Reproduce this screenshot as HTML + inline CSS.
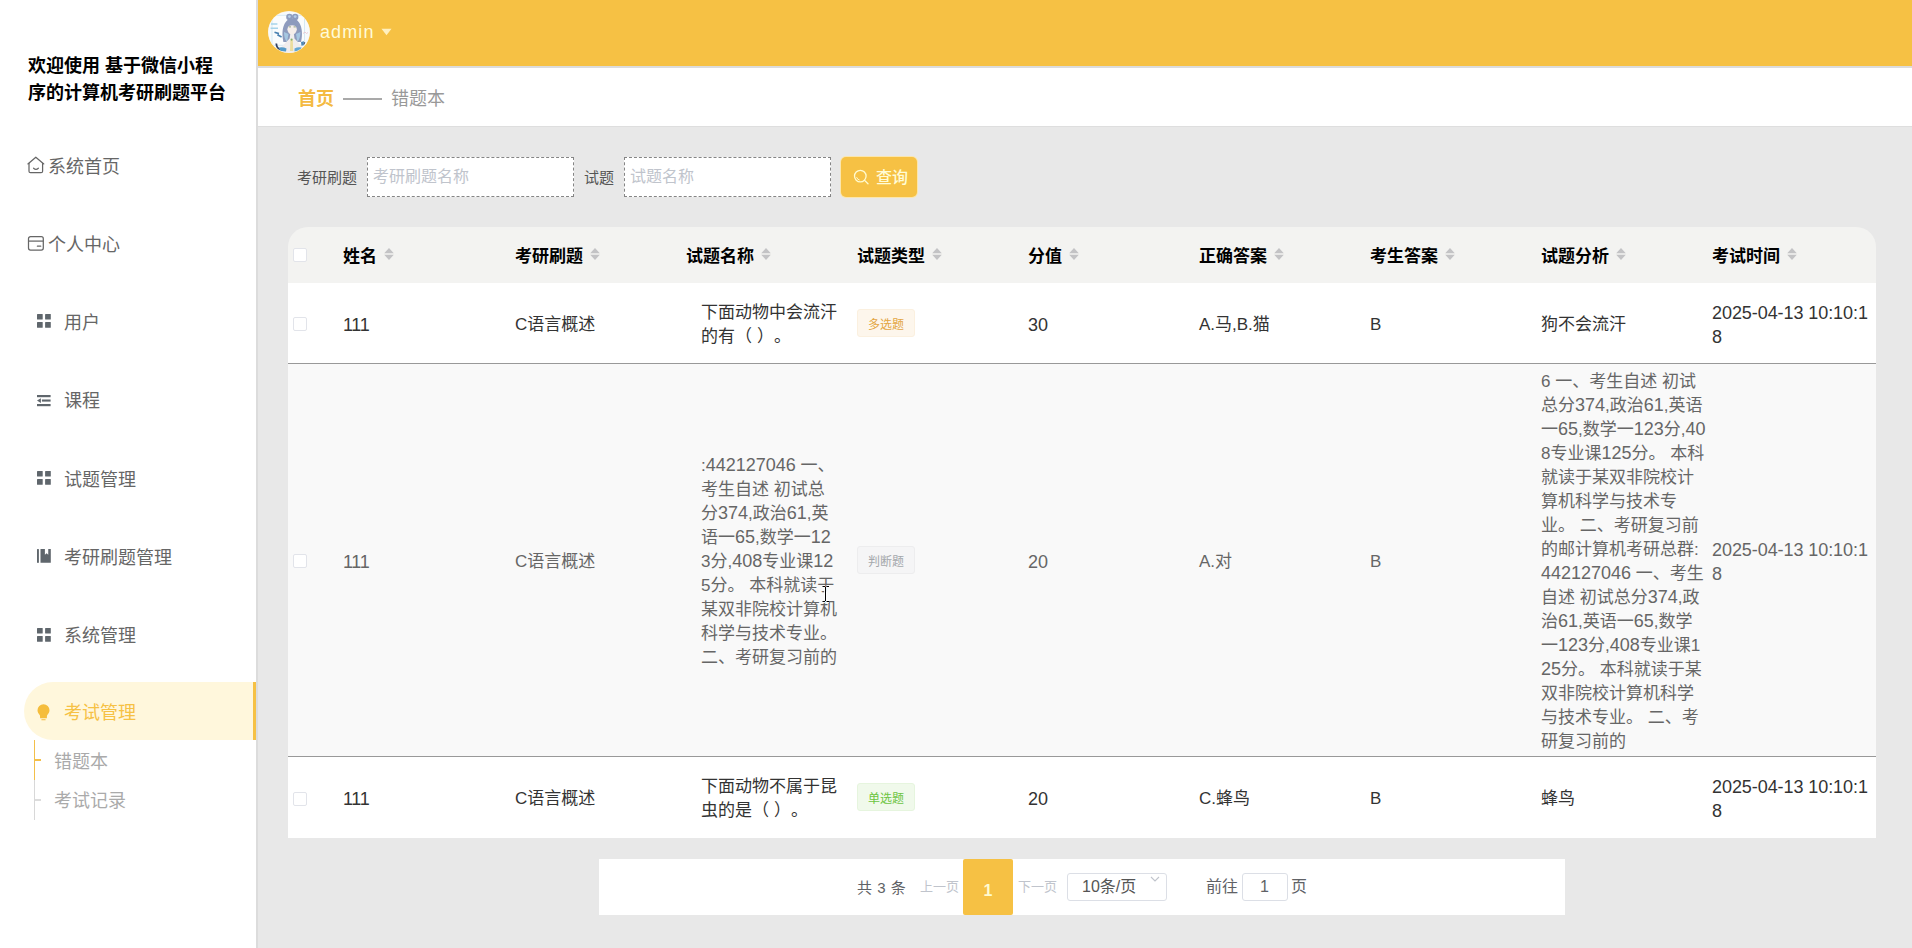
<!DOCTYPE html>
<html lang="zh-CN">
<head>
<meta charset="utf-8">
<title>错题本</title>
<style>
*{box-sizing:border-box;margin:0;padding:0}
html,body{width:1912px;height:948px;overflow:hidden}
body{position:relative;background:#e8e8e8;font-family:"Liberation Sans","Noto Sans CJK SC",sans-serif;color:#333;font-size:17px;text-spacing-trim:space-all}
.abs{position:absolute}
/* sidebar */
#side{position:absolute;left:0;top:0;width:256px;height:948px;background:#fff}
#sideborder{position:absolute;left:256px;top:0;width:2px;height:948px;background:#dcdcdc}
#title{position:absolute;left:28px;top:53px;width:215px;font-size:18px;line-height:27px;font-weight:700;color:#000;white-space:nowrap}
.mi{position:absolute;left:0;width:256px;height:58px;line-height:58px;font-size:18px;color:#666;white-space:nowrap}
.mi .tx{position:absolute;top:2px}
.mi svg{position:absolute}
#active{position:absolute;left:24px;top:682px;width:232px;height:58px;background:#fff7dc;border-radius:29px 0 0 29px;border-right:3px solid #f6c144}
.sub{position:absolute;left:54px;font-size:18px;color:#aaa;line-height:24px;white-space:nowrap}
/* header */
#hdr{position:absolute;left:258px;top:0;width:1654px;height:66px;background:#f6c144}
#hdrborder{position:absolute;left:258px;top:66px;width:1654px;height:2px;background:#dcdcdc}
#crumb{position:absolute;left:258px;top:68px;width:1654px;height:58px;background:#fff}

.inp{width:207px;height:40px;background:#fff;border:1px dashed #858585;font-size:16px;line-height:38px;color:#c0c4cc;padding-left:5px;white-space:nowrap}

.cb{width:14px;height:14px;background:#fff;border:1px solid #e2e4ea;border-radius:2px}
.th{font-size:17px;line-height:24px;font-weight:700;color:#000;white-space:nowrap}
.th svg{margin-left:7px;position:relative;top:-2px}
.td{font-size:17px;line-height:24px;white-space:nowrap;transform:translateY(-50%);margin-top:2px}
.ls1{font-size:18px;letter-spacing:-.3px}.ls4{font-size:18px;letter-spacing:-.07px}
.tag{height:28px;line-height:31px;padding:0 10px;font-size:12px;border:1px solid;border-radius:3px;white-space:nowrap}
.tag-w{background:#fdf6ec;border-color:#fbf0df;color:#e3a542}
.tag-i{background:#f5f5f6;border-color:#ededee;color:#a4a7ab}
.tag-s{background:#f0f9eb;border-color:#e6f5de;color:#6cc442}

.pgt{line-height:24px;white-space:nowrap}
.pr{position:relative;left:5px}
.d{font-size:18px;line-height:1}
</style>
</head>
<body>
<div id="side"></div>
<div id="sideborder"></div>
<div id="title">欢迎使用 基于微信小程<br>序的计算机考研刷题平台</div>

<div id="hdr"></div>
<div id="hdrborder"></div>
<div id="crumb"></div>
<div class="abs" style="left:258px;top:126px;width:1654px;height:1px;background:#dedede"></div>

<!-- sidebar menu -->
<div class="mi" style="top:136px"><svg style="left:26px;top:19px" width="20" height="20" viewBox="0 0 20 20" fill="none" stroke="#666" stroke-width="1.25" stroke-linejoin="round" stroke-linecap="round"><path d="M1.9 8.9 L9.8 2.2 L17.8 8.9"/><path d="M3 8.3 V16.2 Q3 17.7 4.5 17.7 H15.1 Q16.6 17.7 16.6 16.2 V8.3"/><path d="M7.6 13.2 Q9.95 15.4 12.35 13.2"/></svg><span class="tx" style="left:48px">系统首页</span></div>
<div class="mi" style="top:214px"><svg style="left:26px;top:20px" width="20" height="18" viewBox="0 0 20 18" fill="none" stroke="#666" stroke-width="1.25"><rect x="2.5" y="2.7" width="14.8" height="13.3" rx="2"/><path d="M2.5 7.1 H17.3"/><path d="M11.4 12.2 H14.7" stroke-linecap="round"/></svg><span class="tx" style="left:48px">个人中心</span></div>
<div class="mi" style="top:292px"><svg style="left:37px;top:22.2px" width="14" height="14" viewBox="0 0 14 14" fill="#5f666c"><rect x="0" y="0" width="5.7" height="5.6" rx=".5"/><rect x="8.1" y="0" width="5.7" height="5.6" rx=".5"/><rect x="0" y="8.1" width="5.7" height="5.6" rx=".5"/><rect x="8.1" y="8.1" width="5.7" height="5.6" rx=".5"/></svg><span class="tx" style="left:64px">用户</span></div>
<div class="mi" style="top:370px"><svg style="left:37px;top:24.6px" width="14" height="12" viewBox="0 0 14 12" fill="#5f666c"><rect x="0" y="0" width="13.6" height="2.2"/><rect x="4.9" y="4.5" width="8.7" height="2.1"/><rect x="0" y="9" width="13.6" height="2.2"/><path d="M0 5.6 L3.9 3.2 V8 Z"/></svg><span class="tx" style="left:64px">课程</span></div>
<div class="mi" style="top:449px"><svg style="left:37px;top:22.2px" width="14" height="14" viewBox="0 0 14 14" fill="#5f666c"><rect x="0" y="0" width="5.7" height="5.6" rx=".5"/><rect x="8.1" y="0" width="5.7" height="5.6" rx=".5"/><rect x="0" y="8.1" width="5.7" height="5.6" rx=".5"/><rect x="8.1" y="8.1" width="5.7" height="5.6" rx=".5"/></svg><span class="tx" style="left:64px">试题管理</span></div>
<div class="mi" style="top:527px"><svg style="left:37px;top:22px" width="14" height="14" viewBox="0 0 14 14" fill="#5f666c"><rect x="0" y="0.1" width="1.9" height="13.7"/><path d="M3.5 0.1 H7.9 V5.8 L9.6 4.3 L11.25 5.8 V0.1 H13.8 V13.8 H3.5 Z"/></svg><span class="tx" style="left:64px">考研刷题管理</span></div>
<div class="mi" style="top:605px"><svg style="left:37px;top:22.7px" width="14" height="14" viewBox="0 0 14 14" fill="#5f666c"><rect x="0" y="0" width="5.7" height="5.6" rx=".5"/><rect x="8.1" y="0" width="5.7" height="5.6" rx=".5"/><rect x="0" y="8.1" width="5.7" height="5.6" rx=".5"/><rect x="8.1" y="8.1" width="5.7" height="5.6" rx=".5"/></svg><span class="tx" style="left:64px">系统管理</span></div>
<div id="active"></div>
<div class="mi" style="top:682px;color:#f6c144"><svg style="left:36.5px;top:21.5px" width="13" height="17" viewBox="0 0 13 17" fill="#f5bd3c"><path d="M6.5 0.3 A6 6 0 0 1 12.5 6.3 C12.5 8.6 11.2 9.8 10.3 10.9 C9.9 11.5 9.9 12.5 9.9 14.2 H3.1 C3.1 12.5 3.1 11.5 2.7 10.9 C1.8 9.8 0.5 8.6 0.5 6.3 A6 6 0 0 1 6.5 0.3 Z"/><rect x="4.3" y="15.2" width="4.4" height="1.1" rx=".5"/></svg><span class="tx" style="left:64px">考试管理</span></div>
<div class="abs" style="left:34px;top:740px;width:1px;height:40px;background:#f3bf4a"></div>
<div class="abs" style="left:34px;top:780px;width:1px;height:40px;background:#d8d8d8"></div>
<div class="abs" style="left:35px;top:759px;width:6px;height:1.5px;background:#f3bf4a"></div>
<div class="abs" style="left:35px;top:799px;width:6px;height:1.5px;background:#dcdcdc"></div>
<div class="sub" style="top:750px">错题本</div>
<div class="sub" style="top:789px">考试记录</div>
<!--MENU-->

<!-- header -->
<svg class="abs" style="left:268px;top:11px" width="42" height="42" viewBox="0 0 42 42">
  <defs><clipPath id="avc"><circle cx="21" cy="21" r="20.6"/></clipPath><filter id="avb" x="-10%" y="-10%" width="120%" height="120%"><feGaussianBlur stdDeviation="0.75"/></filter></defs>
  <circle cx="21" cy="21" r="21" fill="#fdf3dc"/>
  <g clip-path="url(#avc)"><g filter="url(#avb)">
    <rect x="-2" y="-2" width="46" height="46" fill="#f7fafc"/>
    <rect x="4" y="4.3" width="32.5" height="30" fill="#fafcfd" stroke="#d6e9f2" stroke-width="1"/>
    <path d="M3 13 H9.4 M2.6 17.2 H10" stroke="#a6d3ea" stroke-width="1.6" fill="none"/>
    <path d="M6.5 21.3 L11 22.6 M9.4 23.8 L13.6 26" stroke="#4a82b1" stroke-width="1.7" fill="none"/>
    <path d="M35 22.5 l2 -1.5 l1.5 1.5 l1.5 -1" stroke="#e6c3cd" stroke-width=".8" fill="none"/>
    <circle cx="21.4" cy="6" r="3.2" fill="#8e9cbe"/><circle cx="27.2" cy="6" r="3.2" fill="#8e9cbe"/>
    <circle cx="21.4" cy="5.6" r="1.4" fill="#b4cde6"/><circle cx="27.2" cy="5.6" r="1.4" fill="#b4cde6"/>
    <path d="M15.4 31 C12.8 20 15.5 8 24.2 7.6 C33 8 35.6 20 33 31 Z" fill="#8d9bbd"/>
    <path d="M16 21 C16 25 16.8 28.5 19 31 L20.5 23 Z M32.4 21 C32.4 25 31.6 28.5 29.4 31 L28 23 Z" fill="#a5c7e1"/>
    <path d="M22.3 23 L25.9 23 L26.5 27.5 L34.5 36 L35 44 L13 44 L13.5 36 L21.6 27.5 Z" fill="#f0eded"/>
    <ellipse cx="24.1" cy="18.2" rx="4.7" ry="5.4" fill="#f5eeea"/>
    <path d="M19 17.5 C19.8 13 28.5 13 29.3 17.5 L29.3 13.8 C26.5 10.5 21.5 10.5 19 13.8 Z" fill="#8d9bbd"/>
    <path d="M20.8 15.9 h2.2 M25.6 15.9 h2.2" stroke="#8fa683" stroke-width="1" fill="none"/>
    <path d="M22.4 29 L24.8 29 L25.2 40 L22 40 Z" fill="#ecdd9f"/>
    <circle cx="23.6" cy="28.6" r="1.1" fill="#86b168"/>
    <path d="M8.3 32.5 Q8.5 37.5 13.5 39.5" stroke="#303f60" stroke-width="1.8" fill="none"/>
    <path d="M11 36.5 Q15 35.5 18.5 37.5 L18 40.5 L12 40 Z" fill="#579bc9"/>
    <path d="M26.5 37.5 Q30 35.5 33.5 36.5 L32 40 L26.5 40.5 Z" fill="#62a7d4"/>
    <path d="M33 31 L36 30.2 L35.5 34.2 L33.5 34.8 Z" fill="#4b87b8"/>
    <path d="M35.8 33.5 l1 -2.3" stroke="#2f3d58" stroke-width="1"/>
  </g></g>
</svg>
<div class="abs" style="left:320px;top:19px;font-size:18px;line-height:26px;color:#fffbd8;letter-spacing:1.1px">admin</div>
<svg class="abs" style="left:381px;top:28px" width="11" height="8" viewBox="0 0 11 8"><path d="M0.5 0.8 H10.5 L5.5 7.2 Z" fill="#fff0bf"/></svg>
<!-- breadcrumb -->
<div class="abs" style="left:298px;top:86px;font-size:18px;line-height:26px;font-weight:700;color:#f4ba42;white-space:nowrap">首页</div>
<div class="abs" style="left:343px;top:98px;width:39px;height:2px;background:#a9a9a9"></div>
<div class="abs" style="left:391px;top:86px;font-size:18px;line-height:26px;color:#999;white-space:nowrap">错题本</div>


<!-- filter -->
<div class="abs" style="left:297px;top:167px;font-size:15px;line-height:22px;color:#555;white-space:nowrap">考研刷题</div>
<div class="abs inp" style="left:367px;top:157px"><span>考研刷题名称</span></div>
<div class="abs" style="left:584px;top:167px;font-size:15px;line-height:22px;color:#555;white-space:nowrap">试题</div>
<div class="abs inp" style="left:624px;top:157px"><span>试题名称</span></div>
<div class="abs" style="left:841px;top:157px;width:76px;height:40px;background:#f6c144;border-radius:5px;box-shadow:0 0 0 1px #fbe6ad"></div>
<svg class="abs" style="left:853px;top:169px" width="16" height="16" viewBox="0 0 16 16" fill="none" stroke="#fffbd0" stroke-width="1.3"><circle cx="7.3" cy="7.1" r="5.8"/><path d="M11.6 11.4 L15 14.8" stroke-linecap="round"/><path d="M3.6 8.2 A3.9 3.9 0 0 0 6.6 11" stroke-width="1"/></svg>
<div class="abs" style="left:876px;top:167px;font-size:16px;font-weight:500;line-height:22px;color:#fffcd6;white-space:nowrap">查询</div>

<!-- table -->
<div class="abs" style="left:288px;top:227px;width:1588px;height:56px;background:#f3f3f1;border-radius:20px 20px 0 0"></div>
<div class="abs" style="left:288px;top:283px;width:1588px;height:80px;background:#fff"></div>
<div class="abs" style="left:288px;top:363px;width:1588px;height:1px;background:#999"></div>
<div class="abs" style="left:288px;top:364px;width:1588px;height:392px;background:#f9f9f9"></div>
<div class="abs" style="left:288px;top:756px;width:1588px;height:1px;background:#999"></div>
<div class="abs" style="left:288px;top:757px;width:1588px;height:81px;background:#fff"></div>
<div class="abs cb" style="left:293px;top:248px"></div>
<div class="abs cb" style="left:293px;top:317px"></div>
<div class="abs cb" style="left:293px;top:554px"></div>
<div class="abs cb" style="left:293px;top:792px"></div>
<div class="abs th" style="left:343px;top:245px">姓名<svg width="10" height="12" viewBox="0 0 10 12"><path d="M5 0 L9.8 5.3 H0.2 Z M5 12 L9.8 6.7 H0.2 Z" fill="#c3c3c5"/></svg></div>
<div class="abs th" style="left:515px;top:245px">考研刷题<svg width="10" height="12" viewBox="0 0 10 12"><path d="M5 0 L9.8 5.3 H0.2 Z M5 12 L9.8 6.7 H0.2 Z" fill="#c3c3c5"/></svg></div>
<div class="abs th" style="left:686px;top:245px">试题名称<svg width="10" height="12" viewBox="0 0 10 12"><path d="M5 0 L9.8 5.3 H0.2 Z M5 12 L9.8 6.7 H0.2 Z" fill="#c3c3c5"/></svg></div>
<div class="abs th" style="left:857px;top:245px">试题类型<svg width="10" height="12" viewBox="0 0 10 12"><path d="M5 0 L9.8 5.3 H0.2 Z M5 12 L9.8 6.7 H0.2 Z" fill="#c3c3c5"/></svg></div>
<div class="abs th" style="left:1028px;top:245px">分值<svg width="10" height="12" viewBox="0 0 10 12"><path d="M5 0 L9.8 5.3 H0.2 Z M5 12 L9.8 6.7 H0.2 Z" fill="#c3c3c5"/></svg></div>
<div class="abs th" style="left:1199px;top:245px">正确答案<svg width="10" height="12" viewBox="0 0 10 12"><path d="M5 0 L9.8 5.3 H0.2 Z M5 12 L9.8 6.7 H0.2 Z" fill="#c3c3c5"/></svg></div>
<div class="abs th" style="left:1370px;top:245px">考生答案<svg width="10" height="12" viewBox="0 0 10 12"><path d="M5 0 L9.8 5.3 H0.2 Z M5 12 L9.8 6.7 H0.2 Z" fill="#c3c3c5"/></svg></div>
<div class="abs th" style="left:1541px;top:245px">试题分析<svg width="10" height="12" viewBox="0 0 10 12"><path d="M5 0 L9.8 5.3 H0.2 Z M5 12 L9.8 6.7 H0.2 Z" fill="#c3c3c5"/></svg></div>
<div class="abs th" style="left:1712px;top:245px">考试时间<svg width="10" height="12" viewBox="0 0 10 12"><path d="M5 0 L9.8 5.3 H0.2 Z M5 12 L9.8 6.7 H0.2 Z" fill="#c3c3c5"/></svg></div>
<div class="abs td ls1" style="left:343px;top:323px;color:#333">111</div>
<div class="abs td" style="left:515px;top:323px;color:#333">C语言概述</div>
<div class="abs td" style="left:701px;top:323px;color:#333">下面动物中会流汗<br>的有（<span class="pr">）。</span></div>
<div class="abs tag tag-w" style="left:857px;top:309px">多选题</div>
<div class="abs td ls4" style="left:1028px;top:323px;color:#333">30</div>
<div class="abs td" style="left:1199px;top:323px;color:#333">A.马,B.猫</div>
<div class="abs td" style="left:1370px;top:323px;color:#333">B</div>
<div class="abs td" style="left:1541px;top:323px;color:#333">狗不会流汗</div>
<div class="abs td ls4" style="left:1712px;top:323px;color:#333">2025-04-13 10:10:1<br>8</div>
<div class="abs td ls1" style="left:343px;top:560px;color:#666">111</div>
<div class="abs td" style="left:515px;top:560px;color:#666">C语言概述</div>
<div class="abs td" style="left:701px;top:560px;color:#666">:<span class="d">442127046</span> 一、<br>考生自述 初试总<br>分<span class="d">374</span>,政治<span class="d">61</span>,英<br>语一<span class="d">65</span>,数学一<span class="d">12</span><br>3分,<span class="d">408</span>专业课<span class="d">12</span><br>5分。 本科就读于<br>某双非院校计算机<br>科学与技术专业。<br>二、考研复习前的</div>
<div class="abs tag tag-i" style="left:857px;top:546px">判断题</div>
<div class="abs td ls4" style="left:1028px;top:560px;color:#666">20</div>
<div class="abs td" style="left:1199px;top:560px;color:#666">A.对</div>
<div class="abs td" style="left:1370px;top:560px;color:#666">B</div>
<div class="abs td" style="left:1541px;top:560px;color:#666">6 一、考生自述 初试<br>总分<span class="d">374</span>,政治<span class="d">61</span>,英语<br>一<span class="d">65</span>,数学一<span class="d">123</span>分,<span class="d">40</span><br>8专业课<span class="d">125</span>分。 本科<br>就读于某双非院校计<br>算机科学与技术专<br>业。 二、考研复习前<br>的邮计算机考研总群:<br><span class="d">442127046</span> 一、考生<br>自述 初试总分<span class="d">374</span>,政<br>治<span class="d">61</span>,英语一<span class="d">65</span>,数学<br>一<span class="d">123</span>分,<span class="d">408</span>专业课1<br><span class="d">25</span>分。 本科就读于某<br>双非院校计算机科学<br>与技术专业。 二、考<br>研复习前的</div>
<div class="abs td ls4" style="left:1712px;top:560px;color:#666">2025-04-13 10:10:1<br>8</div>
<div class="abs td ls1" style="left:343px;top:797px;color:#333">111</div>
<div class="abs td" style="left:515px;top:797px;color:#333">C语言概述</div>
<div class="abs td" style="left:701px;top:797px;color:#333">下面动物不属于昆<br>虫的是（<span class="pr">）。</span></div>
<div class="abs tag tag-s" style="left:857px;top:783px">单选题</div>
<div class="abs td ls4" style="left:1028px;top:797px;color:#333">20</div>
<div class="abs td" style="left:1199px;top:797px;color:#333">C.蜂鸟</div>
<div class="abs td" style="left:1370px;top:797px;color:#333">B</div>
<div class="abs td" style="left:1541px;top:797px;color:#333">蜂鸟</div>
<div class="abs td ls4" style="left:1712px;top:797px;color:#333">2025-04-13 10:10:1<br>8</div>


<!-- mouse text cursor -->
<svg class="abs" style="left:820px;top:584px" width="12" height="20" viewBox="0 0 12 20"><path d="M2.50 2.50 H5 M6.50 2.50 H9 M5.5 3 V17 M2.50 17.50 H5 M6.50 17.50 H9" stroke="#fff" stroke-width="3" fill="none" opacity=".85"/><path d="M2.50 2.50 H5 M6.50 2.50 H9 M5.5 3 V17 M2.50 17.50 H5 M6.50 17.50 H9" stroke="#000" stroke-width="1" fill="none"/></svg>
<!-- pagination -->
<div class="abs" style="left:599px;top:859px;width:966px;height:56px;background:#fff"></div>
<div class="abs pgt" style="left:857px;top:876px;font-size:15px;color:#606266;word-spacing:1px">共 3 条</div>
<div class="abs pgt" style="left:920px;top:875px;font-size:13px;color:#c0c4cc">上一页</div>
<div class="abs" style="left:963px;top:859px;width:50px;height:56px;background:#f6c144;border-radius:2px;color:#fffbd0;font-size:16px;font-weight:700;line-height:63px;text-align:center">1</div>
<div class="abs pgt" style="left:1018px;top:875px;font-size:13px;color:#c0c4cc">下一页</div>
<div class="abs" style="left:1067px;top:873px;width:100px;height:28px;background:#fff;border:1px solid #dcdfe6;border-radius:3px"></div>
<div class="abs pgt" style="left:1082px;top:875px;font-size:16px;color:#555">10条/页</div>
<svg class="abs" style="left:1150px;top:876px" width="10" height="6" viewBox="0 0 10 6" fill="none" stroke="#c0c4cc" stroke-width="1.1"><path d="M1 1 L5 5 L9 1"/></svg>
<div class="abs pgt" style="left:1206px;top:875px;font-size:16px;color:#606266">前往</div>
<div class="abs" style="left:1242px;top:873px;width:46px;height:28px;background:#fff;border:1px solid #dcdfe6;border-radius:3px"></div>
<div class="abs pgt" style="left:1260px;top:875px;font-size:16px;color:#606266">1</div>
<div class="abs pgt" style="left:1291px;top:875px;font-size:16px;color:#606266">页</div>

</body>
</html>
